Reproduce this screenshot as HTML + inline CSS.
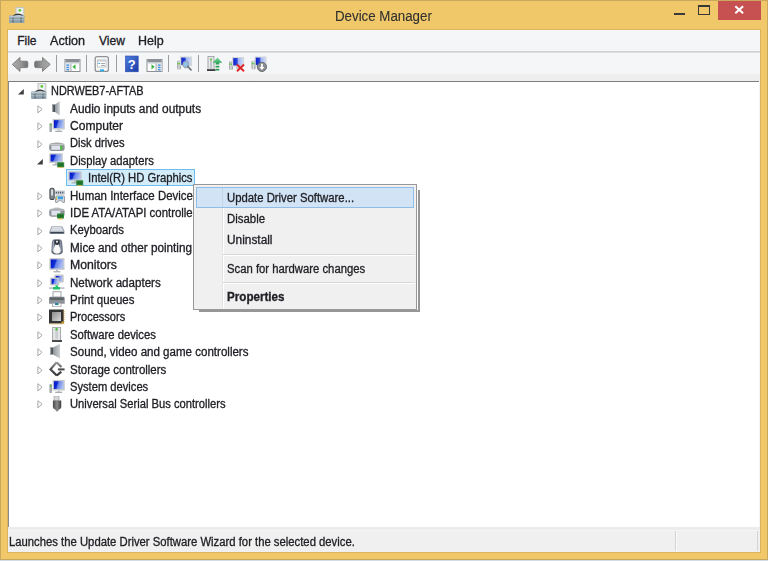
<!DOCTYPE html>
<html><head><meta charset="utf-8">
<style>
*{margin:0;padding:0;box-sizing:border-box}
html,body{width:768px;height:561px;overflow:hidden;background:#d3dbe4}
body{position:relative;font-family:"Liberation Sans",sans-serif;color:#000}
.a{position:absolute}
#frame{left:0;top:0;width:768px;height:560px;background:#f0c869;border:1px solid #c9a75c}
#title{left:335px;top:6px;font-size:14px;line-height:20px;color:#303030;-webkit-text-stroke:0.1px #303030;white-space:nowrap;transform:scaleX(0.95);transform-origin:0 0}
#close{left:718px;top:1px;width:43px;height:19px;background:#c75050}
#menubar{left:8px;top:30px;width:752px;height:22px;background:#f5f6f7;border-bottom:1px solid #cfd2d5}
#toolbar{left:8px;top:52px;width:752px;height:29px;background:linear-gradient(#dcdfe2 0,#dcdfe2 1px,#f5f6f7 1px,#f5f6f7 22px,#efefef 22px,#eeeeee 29px)}
#tree{left:8px;top:81px;width:751px;height:446px;background:#fff;border-top:1px solid #7c7c7c;border-left:1px solid #8a8a8a}
#status{left:8px;top:527px;width:752px;height:25px;background:linear-gradient(#ececec 0,#ececec 3px,#f6f6f6 3px,#f6f6f6 4px,#f0f0f0 4px)}
.t{position:absolute;font-size:12px;line-height:17px;white-space:nowrap;transform-origin:0 0;color:#202026;-webkit-text-stroke:0.3px #202026}
.mi{position:absolute;font-size:12px;line-height:16px;white-space:nowrap;transform-origin:0 0;color:#202026;-webkit-text-stroke:0.3px #202026}
.sep{position:absolute;width:1px;background:#a7a7a7;top:55px;height:17px}
.ic{position:absolute}
#ctx{left:193px;top:184px;width:224px;height:126px;background:#f0f0f0;border:1px solid #979797}
.sh{position:absolute;background:#969696;filter:blur(0.7px)}
</style></head><body>
<div id="frame" class="a"></div>
<div class="a" style="left:7px;top:29px;width:754px;height:524px;border:1px solid #dcb45c"></div>
<svg class="ic" style="left:9.00px;top:6.80px" width="16" height="16" viewBox="0 0 16 16"><rect x="6.9" y="0.6" width="8" height="9" fill="#e6e8ea" stroke="#bcc1c4" stroke-width="0.9"/><rect x="8.8" y="1.8" width="4" height="7" fill="#f7f8f8"/><circle cx="10.8" cy="3.4" r="1.4" fill="#5cc83e"/><path d="M4.3 8.8 Q9 5.6 14 8.8" stroke="#3a3a3a" stroke-width="1.6" fill="none"/><rect x="0.1" y="8.4" width="15.3" height="7.6" rx="0.8" fill="#8ea2ae"/><rect x="0.6" y="8.9" width="14.3" height="1.5" fill="#b9c8d0"/><rect x="0.6" y="12" width="14.3" height="1.2" fill="#a7b7c0"/><rect x="3.3" y="10.8" width="1.6" height="4.3" fill="#56636b"/><rect x="3.7" y="11.6" width="0.8" height="2.2" fill="#c9d3d8"/><rect x="11.1" y="10.8" width="1.6" height="4.3" fill="#56636b"/><rect x="11.5" y="11.6" width="0.8" height="2.2" fill="#c9d3d8"/></svg>
<div id="title" class="a">Device Manager</div>
<div class="a" style="left:674px;top:13px;width:11px;height:2px;background:#3a3a3a"></div>
<div class="a" style="left:698px;top:5px;width:12px;height:10px;border:1px solid #383838;border-top-width:2px"></div>
<div id="close" class="a"></div>
<svg class="a" style="left:734px;top:5px" width="11" height="10" viewBox="0 0 11 10"><path d="M1.3 1.2 L9.1 8.2 M9.1 1.2 L1.3 8.2" stroke="#fff" stroke-width="2.1"/></svg>

<div id="menubar" class="a"></div>
<div class="mi" style="left:17.2px;top:33px">File</div>
<div class="mi" style="left:49.6px;top:33px;transform:scaleX(1.05)">Action</div>
<div class="mi" style="left:99px;top:33px">View</div>
<div class="mi" style="left:138.3px;top:33px;transform:scaleX(1.04)">Help</div>

<div id="toolbar" class="a"></div>
<svg class="a" style="left:0;top:0" width="280" height="81" viewBox="0 0 280 81"><defs><linearGradient id="arrL" x1="0" y1="0" x2="1" y2="0"><stop offset="0" stop-color="#a9a9a9"/><stop offset="0.5" stop-color="#9a9a9a"/><stop offset="1" stop-color="#6e6e6e"/></linearGradient><linearGradient id="arrR" x1="0" y1="0" x2="1" y2="0"><stop offset="0" stop-color="#6e6e6e"/><stop offset="0.5" stop-color="#9a9a9a"/><stop offset="1" stop-color="#a9a9a9"/></linearGradient><linearGradient id="tscr" x1="0" y1="0" x2="1" y2="0"><stop offset="0" stop-color="#0c1fc9"/><stop offset="0.4" stop-color="#2a46dc"/><stop offset="0.55" stop-color="#9fb4f2"/><stop offset="1" stop-color="#cad8fa"/></linearGradient><linearGradient id="tow" x1="0" y1="0" x2="1" y2="0"><stop offset="0" stop-color="#9da1a5"/><stop offset="0.5" stop-color="#d9dbdd"/><stop offset="1" stop-color="#8e9296"/></linearGradient><linearGradient id="hlp" x1="0" y1="0" x2="1" y2="1"><stop offset="0" stop-color="#4d7fe0"/><stop offset="1" stop-color="#1c3aa6"/></linearGradient><linearGradient id="garr" x1="0" y1="0" x2="0" y2="1"><stop offset="0" stop-color="#7fdca0"/><stop offset="1" stop-color="#1e9a48"/></linearGradient></defs>
<path d="M12.3 64.4 L20 57.4 V61.2 H26.6 Q27.8 61.2 27.8 62.4 V66.4 Q27.8 67.6 26.6 67.6 H20 V71.4 Z" fill="url(#arrL)" stroke="#7a7a7a" stroke-width="0.9" stroke-linejoin="round"/>
<path d="M50.2 64.4 L42.5 57.4 V61.2 H35.9 Q34.7 61.2 34.7 62.4 V66.4 Q34.7 67.6 35.9 67.6 H42.5 V71.4 Z" fill="url(#arrR)" stroke="#7a7a7a" stroke-width="0.9" stroke-linejoin="round"/>
<rect x="56" y="55" width="1" height="17" fill="#9d9d9d"/>
<rect x="86" y="55" width="1" height="17" fill="#9d9d9d"/>
<rect x="116" y="55" width="1" height="17" fill="#9d9d9d"/>
<rect x="168" y="55" width="1" height="17" fill="#9d9d9d"/>
<rect x="198" y="55" width="1" height="17" fill="#9d9d9d"/>
<rect x="65.0" y="59.5" width="15" height="12" fill="#fff" stroke="#8d9196"/><rect x="65.5" y="60" width="14" height="2" fill="#8a9098"/><rect x="65.5" y="62" width="14" height="1.5" fill="#c5cbd1"/><rect x="65.5" y="63.5" width="5" height="7.5" fill="#dfe5ec"/><rect x="70.5" y="63.5" width="0.9" height="7.5" fill="#9aa0a6"/><rect x="66.5" y="64.5" width="2.5" height="1.3" fill="#3d8ee0"/><rect x="66.5" y="66.8" width="2.5" height="1.3" fill="#3d8ee0"/><rect x="66.5" y="69.1" width="2.5" height="1.3" fill="#3d8ee0"/><path d="M75.5 64.2 L72.5 66.8 L75.5 69.6 Z" fill="#33b53a"/>
<rect x="147.0" y="59.5" width="15" height="12" fill="#fff" stroke="#8d9196"/><rect x="147.5" y="60" width="14" height="2" fill="#8a9098"/><rect x="147.5" y="62" width="14" height="1.5" fill="#c5cbd1"/><rect x="156.5" y="63.5" width="5" height="7.5" fill="#dfe5ec"/><rect x="155.6" y="63.5" width="0.9" height="7.5" fill="#9aa0a6"/><rect x="158.0" y="64.5" width="2.5" height="1.3" fill="#3d8ee0"/><rect x="158.0" y="66.8" width="2.5" height="1.3" fill="#3d8ee0"/><rect x="158.0" y="69.1" width="2.5" height="1.3" fill="#3d8ee0"/><path d="M151.5 64.2 L154.5 66.8 L151.5 69.6 Z" fill="#33b53a"/>
<rect x="95.2" y="56.6" width="13.2" height="14.8" rx="2" fill="#f7f7f7" stroke="#8f9397" stroke-width="1.3"/><rect x="97.5" y="60" width="8.5" height="7" fill="#fff" stroke="#b5babf" stroke-width="0.8"/><rect x="97.5" y="60" width="8.5" height="1.6" fill="#c9ced3"/><rect x="98.3" y="63" width="1.8" height="1" fill="#3aa0e8"/><path d="M101 63.5 H105 M101 65.5 H105" stroke="#8e949a" stroke-width="0.8"/><rect x="100" y="69.3" width="4" height="2" fill="#2fb0ea"/>
<rect x="125.4" y="56" width="12.8" height="15.8" fill="url(#hlp)"/><rect x="125.4" y="56" width="12.8" height="15.8" fill="none" stroke="#2a4aa8" stroke-width="0.6"/><text x="131.8" y="68.6" font-family="Liberation Sans" font-size="13" font-weight="bold" fill="#fff" text-anchor="middle">?</text>
<rect x="177" y="60.6" width="4" height="9" rx="1.6" fill="url(#tow)"/><rect x="177.3" y="63" width="3.4" height="1.3" fill="#5fd040"/><rect x="180" y="56.5" width="12" height="9.5" fill="#d4d6d7"/><rect x="181.3" y="57.6" width="9.4" height="7.3" fill="url(#tscr)"/><rect x="184" y="66" width="4" height="2.5" fill="#c8cacc"/>
<circle cx="185.8" cy="64.4" r="2.8" fill="#8ec4f0" stroke="#9aa6b0" stroke-width="1.1"/><path d="M187.8 66.4 L191 69.8" stroke="#6f767c" stroke-width="1.7" stroke-linecap="round"/>
<rect x="208" y="56.5" width="6" height="13.5" fill="#e6e8ea" stroke="#9ea3a7" stroke-width="0.9"/><rect x="210" y="58" width="2" height="11" fill="#c4c8cb"/><circle cx="211" cy="59.5" r="1.1" fill="#6fd050"/><rect x="207" y="69.2" width="8.5" height="1.8" fill="#3e3e3e"/><path d="M217.5 57.6 L222.3 62.7 H219.3 V64.6 H215.7 V62.7 H212.7 Z" fill="url(#garr)"/><rect x="215.5" y="65.8" width="3.8" height="1.7" fill="#2a9a50"/><rect x="215.5" y="68.8" width="3.8" height="1.7" fill="#2a9a50"/>
<rect x="229" y="61.1" width="4" height="9" rx="1.6" fill="url(#tow)"/><rect x="229.3" y="63.5" width="3.4" height="1.3" fill="#5fd040"/><rect x="232" y="57.0" width="12" height="9.5" fill="#d4d6d7"/><rect x="233.3" y="58.1" width="9.4" height="7.3" fill="url(#tscr)"/><rect x="236" y="66.5" width="4" height="2.5" fill="#c8cacc"/>
<path d="M237 64.6 L244 71.2 M244 64.6 L237 71.2" stroke="#e0242c" stroke-width="2"/>
<rect x="251.5" y="60.6" width="4" height="9" rx="1.6" fill="url(#tow)"/><rect x="251.8" y="63" width="3.4" height="1.3" fill="#5fd040"/><rect x="254.5" y="56.5" width="12" height="9.5" fill="#d4d6d7"/><rect x="255.8" y="57.6" width="9.4" height="7.3" fill="url(#tscr)"/><rect x="258.5" y="66" width="4" height="2.5" fill="#c8cacc"/>
<circle cx="261.9" cy="66.9" r="4.6" fill="#8a8e92" stroke="#5f6468" stroke-width="0.9"/><path d="M261.9 63.8 V68.5" stroke="#fff" stroke-width="1.8"/><path d="M259.4 67 L261.9 70 L264.4 67 Z" fill="#fff"/>
</svg>
<div id="tree" class="a"></div>
<div class="a" style="left:759px;top:81px;width:1px;height:446px;background:#f3f4f6"></div>
<div id="status" class="a"></div>
<div class="a" style="left:675px;top:531px;width:1px;height:20px;background:#d4d4d4"></div><div class="a" style="left:676px;top:531px;width:1px;height:20px;background:#fafafa"></div>
<div class="a" style="left:757px;top:531px;width:1px;height:20px;background:#d4d4d4"></div>
<div class="t" style="left:9.3px;top:534px;transform:scaleX(0.941)">Launches the Update Driver Software Wizard for the selected device.</div>

<svg width="0" height="0" style="position:absolute"><defs>
<linearGradient id="scr" x1="0" y1="0" x2="1" y2="0.25"><stop offset="0" stop-color="#0012c4"/><stop offset="0.42" stop-color="#1232d8"/><stop offset="0.52" stop-color="#6680e8"/><stop offset="1" stop-color="#aabef2"/></linearGradient>
<linearGradient id="cone" x1="0" y1="0" x2="1" y2="0"><stop offset="0" stop-color="#8e959b"/><stop offset="1" stop-color="#cdd1d4"/></linearGradient>
<linearGradient id="chip" x1="0" y1="0" x2="1" y2="1"><stop offset="0" stop-color="#8d8d8d"/><stop offset="1" stop-color="#d8d8d8"/></linearGradient>
<linearGradient id="stg" x1="0" y1="0" x2="0" y2="1" gradientUnits="objectBoundingBox"><stop offset="0" stop-color="#9a9a9a"/><stop offset="0.5" stop-color="#555"/><stop offset="1" stop-color="#333"/></linearGradient>
<linearGradient id="usb" x1="0" y1="0" x2="1" y2="0"><stop offset="0" stop-color="#4a4a4a"/><stop offset="0.5" stop-color="#8a8a8a"/><stop offset="1" stop-color="#3c3c3c"/></linearGradient>
</defs></svg>
<svg class="ic" style="left:30.80px;top:82.60px" width="16" height="16" viewBox="0 0 16 16"><rect x="6.9" y="0.6" width="8" height="9" fill="#e6e8ea" stroke="#bcc1c4" stroke-width="0.9"/><rect x="8.8" y="1.8" width="4" height="7" fill="#f7f8f8"/><circle cx="10.8" cy="3.4" r="1.4" fill="#5cc83e"/><path d="M4.3 8.8 Q9 5.6 14 8.8" stroke="#3a3a3a" stroke-width="1.6" fill="none"/><rect x="0.1" y="8.4" width="15.3" height="7.6" rx="0.8" fill="#8ea2ae"/><rect x="0.6" y="8.9" width="14.3" height="1.5" fill="#b9c8d0"/><rect x="0.6" y="12" width="14.3" height="1.2" fill="#a7b7c0"/><rect x="3.3" y="10.8" width="1.6" height="4.3" fill="#56636b"/><rect x="3.7" y="11.6" width="0.8" height="2.2" fill="#c9d3d8"/><rect x="11.1" y="10.8" width="1.6" height="4.3" fill="#56636b"/><rect x="11.5" y="11.6" width="0.8" height="2.2" fill="#c9d3d8"/></svg>
<svg class="ic" style="left:18.30px;top:89.30px" width="6" height="6" viewBox="0 0 6 6"><path d="M5.8 0 V5.6 H0 Z" fill="#404040"/></svg>
<div class="t" style="left:51.0px;top:83.30px;transform:scaleX(0.9107)">NDRWEB7-AFTAB</div>
<svg class="ic" style="left:49.00px;top:99.99px" width="16" height="16" viewBox="0 0 16 16"><rect x="3" y="4.5" width="3" height="7.5" fill="#4a5056"/><rect x="3" y="4.5" width="1.2" height="7.5" fill="#9aa4ad"/><path d="M6 4.5 L10.8 0.9 V15.5 L6 12 Z" fill="url(#cone)"/></svg>
<svg class="ic" style="left:37.00px;top:104.79px" width="6" height="9" viewBox="0 0 6 9"><path d="M0.9 0.7 L5.1 4.3 L0.9 7.9 Z" fill="#fff" stroke="#a8a8a8" stroke-width="1"/></svg>
<div class="t" style="left:69.5px;top:100.69px;transform:scaleX(0.9924)">Audio inputs and outputs</div>
<svg class="ic" style="left:49.00px;top:117.38px" width="16" height="16" viewBox="0 0 16 16"><rect x="0.4" y="6.1" width="2.6" height="9" rx="0.8" fill="#a6abaf"/><rect x="0.9" y="7.1" width="1.6" height="1.6" fill="#62c04a"/><rect x="3.6" y="1.9" width="12.2" height="10.6" fill="#c8cbce"/><rect x="4.9" y="3.2" width="9.6" height="7.8" fill="url(#scr)"/><rect x="8.7" y="12.5" width="2" height="1.2" fill="#b5b9bc"/><rect x="6.199999999999999" y="13.7" width="7" height="1.3" fill="#a9adb1"/></svg>
<svg class="ic" style="left:37.00px;top:122.18px" width="6" height="9" viewBox="0 0 6 9"><path d="M0.9 0.7 L5.1 4.3 L0.9 7.9 Z" fill="#fff" stroke="#a8a8a8" stroke-width="1"/></svg>
<div class="t" style="left:69.5px;top:118.08px;transform:scaleX(1.0059)">Computer</div>
<svg class="ic" style="left:49.00px;top:134.77px" width="16" height="16" viewBox="0 0 16 16"><path d="M4 8.6 Q5 7.2 6.5 7.2 H9.5 Q11 7.2 12 8.6 Z" fill="#c9cbcd"/><rect x="0.2" y="8.3" width="15.4" height="7.6" rx="2.6" fill="#8f9397"/><rect x="1" y="9" width="13.8" height="1.3" rx="0.6" fill="#c5c8cb"/><rect x="2.4" y="10.6" width="9" height="4.2" fill="#dfe2ec"/><rect x="11.2" y="10.6" width="2" height="4.2" rx="0.8" fill="#46c03a"/></svg>
<svg class="ic" style="left:37.00px;top:139.57px" width="6" height="9" viewBox="0 0 6 9"><path d="M0.9 0.7 L5.1 4.3 L0.9 7.9 Z" fill="#fff" stroke="#a8a8a8" stroke-width="1"/></svg>
<div class="t" style="left:69.5px;top:135.47px;transform:scaleX(0.9288)">Disk drives</div>
<svg class="ic" style="left:49.00px;top:152.16px" width="16" height="16" viewBox="0 0 16 16"><rect x="0.3" y="1.2" width="13.5" height="9.8" fill="#c8cbce"/><rect x="1.6" y="2.5" width="10.9" height="7.000000000000001" fill="url(#scr)"/><rect x="6.05" y="11.0" width="2" height="1.2" fill="#b5b9bc"/><rect x="3.55" y="12.2" width="7" height="1.3" fill="#a9adb1"/><rect x="8.2" y="10.3" width="7" height="5" fill="#2f8a3a"/><rect x="9.2" y="11.3" width="5" height="3" fill="#1f6e2a"/><rect x="9.2" y="15.3" width="5" height="0.9" fill="#e0b040"/></svg>
<svg class="ic" style="left:36.90px;top:158.86px" width="6" height="6" viewBox="0 0 6 6"><path d="M5.8 0 V5.6 H0 Z" fill="#404040"/></svg>
<div class="t" style="left:69.5px;top:152.86px;transform:scaleX(0.9376)">Display adapters</div>
<div class="a" style="left:66px;top:169px;width:129px;height:17px;background:#d3ecfa;border:1px solid #6fbdec"></div>
<svg class="ic" style="left:68.00px;top:169.55px" width="16" height="16" viewBox="0 0 16 16"><rect x="0.3" y="1.2" width="13.5" height="9.8" fill="#c8cbce"/><rect x="1.6" y="2.5" width="10.9" height="7.000000000000001" fill="url(#scr)"/><rect x="6.05" y="11.0" width="2" height="1.2" fill="#b5b9bc"/><rect x="3.55" y="12.2" width="7" height="1.3" fill="#a9adb1"/><rect x="8.2" y="10.3" width="7" height="5" fill="#2f8a3a"/><rect x="9.2" y="11.3" width="5" height="3" fill="#1f6e2a"/><rect x="9.2" y="15.3" width="5" height="0.9" fill="#e0b040"/></svg>
<div class="t" style="left:87.5px;top:170.25px;transform:scaleX(0.9384)">Intel(R) HD Graphics</div>
<svg class="ic" style="left:49.00px;top:186.94px" width="16" height="16" viewBox="0 0 16 16"><rect x="0.4" y="0.8" width="5.3" height="12.2" rx="2.6" fill="#3c4248"/><rect x="1.2" y="1.6" width="3.7" height="10.6" rx="1.8" fill="#7e868d"/><rect x="2.3" y="2.5" width="1.5" height="6" fill="#f4f4f4"/><rect x="6" y="3.5" width="10" height="4.2" rx="0.8" fill="#c9ced6"/><path d="M6.8 5.6 H15.2" stroke="#56606c" stroke-width="1.6" stroke-dasharray="1.2 0.9"/><path d="M6.3 10 Q6.3 8.5 8 8.5 H14.2 Q16 8.5 16 10.5 V14.5 Q16 16 14.5 16 Q13.2 16 12.6 14.2 H9.6 Q9 16 7.8 16 Q6 16 6 14.5 Z" fill="#8d949b"/><path d="M7 10.3 Q7 9.2 8.2 9.2 H14 Q15.2 9.2 15.2 10.5 V14.2 Q15.2 15.2 14.4 15.2 Q13.6 15.2 13.2 13.5 H9.2 Q8.8 15.2 7.9 15.2 Q7 15.2 7 14.2 Z" fill="#d4d8dc"/><rect x="9" y="9.6" width="5" height="2.6" fill="#3a9ee6"/><circle cx="7.9" cy="10.4" r="0.8" fill="#7ad46a"/><circle cx="7.6" cy="12.2" r="0.7" fill="#e89a40"/></svg>
<svg class="ic" style="left:37.00px;top:191.74px" width="6" height="9" viewBox="0 0 6 9"><path d="M0.9 0.7 L5.1 4.3 L0.9 7.9 Z" fill="#fff" stroke="#a8a8a8" stroke-width="1"/></svg>
<div class="t" style="left:69.5px;top:187.64px;transform:scaleX(0.9550)">Human Interface Devices</div>
<svg class="ic" style="left:49.00px;top:204.33px" width="16" height="16" viewBox="0 0 16 16"><path d="M4 5 Q5 3.6 6.5 3.6 H9.5 Q11 3.6 12 5 Z" fill="#c9cbcd"/><rect x="0.2" y="4.7" width="15.4" height="8" rx="2.6" fill="#8f9397"/><rect x="1" y="5.4" width="13.8" height="1.3" rx="0.6" fill="#c5c8cb"/><rect x="2.4" y="7" width="9" height="4.4" fill="#dfe2ec"/><rect x="8" y="9.5" width="7" height="5" fill="#2f8a3a"/><rect x="9" y="10.5" width="5" height="3" fill="#1f6e2a"/><rect x="9" y="14.5" width="5" height="0.9" fill="#e0b040"/></svg>
<svg class="ic" style="left:37.00px;top:209.13px" width="6" height="9" viewBox="0 0 6 9"><path d="M0.9 0.7 L5.1 4.3 L0.9 7.9 Z" fill="#fff" stroke="#a8a8a8" stroke-width="1"/></svg>
<div class="t" style="left:69.5px;top:205.03px;transform:scaleX(0.9500)">IDE ATA/ATAPI controllers</div>
<svg class="ic" style="left:49.00px;top:221.72px" width="16" height="16" viewBox="0 0 16 16"><path d="M3 4.2 H12.6 Q13.4 4.2 13.8 5 L15.6 9.6 V11.3 Q15.6 11.9 15 11.9 H0.9 Q0.3 11.9 0.3 11.3 V9.6 L2 5 Q2.3 4.2 3 4.2 Z" fill="#a3abba"/><path d="M3.4 5 H12.2 L14.4 9.6 H1.4 Z" fill="#e2e5ea"/><path d="M3.5 6.2 H12.3 M2.6 8.3 H13.3" stroke="#b8bec8" stroke-width="0.9" stroke-dasharray="1.1 0.9"/><rect x="1.2" y="9.9" width="13.6" height="1.6" fill="#3a4452"/></svg>
<svg class="ic" style="left:37.00px;top:226.52px" width="6" height="9" viewBox="0 0 6 9"><path d="M0.9 0.7 L5.1 4.3 L0.9 7.9 Z" fill="#fff" stroke="#a8a8a8" stroke-width="1"/></svg>
<div class="t" style="left:69.5px;top:222.42px;transform:scaleX(0.9413)">Keyboards</div>
<svg class="ic" style="left:49.00px;top:239.11px" width="16" height="16" viewBox="0 0 16 16"><path d="M4.5 0.6 Q8 -0.1 11.5 0.6 Q13 1.5 13.2 4 L13.8 12.5 Q13.8 15.6 8 15.6 Q2.4 15.6 2.4 12.5 L2.9 4 Q3.1 1.5 4.5 0.6 Z" fill="#5f6878"/><path d="M3.6 4 Q3.8 2 5 1.3 L5.2 12 Q4.6 13.5 3.3 12 Z" fill="#a0a8b6"/><path d="M12.4 4 Q12.2 2 11 1.3 L10.8 12 Q11.4 13.5 12.7 12 Z" fill="#8a93a2"/><path d="M6.4 5.2 Q8 6.6 9.6 5.2 L11.4 10 Q12.6 14.6 8 14.7 Q3.4 14.6 4.6 10 Z" fill="#f6f6f6"/><path d="M5.6 1.2 H10.4 V5 Q8 6.4 5.6 5 Z" fill="#30363f"/><rect x="7" y="1.8" width="2" height="1.8" fill="#e2e2e2"/></svg>
<svg class="ic" style="left:37.00px;top:243.91px" width="6" height="9" viewBox="0 0 6 9"><path d="M0.9 0.7 L5.1 4.3 L0.9 7.9 Z" fill="#fff" stroke="#a8a8a8" stroke-width="1"/></svg>
<div class="t" style="left:69.5px;top:239.81px;transform:scaleX(0.9780)">Mice and other pointing devices</div>
<svg class="ic" style="left:49.00px;top:256.50px" width="16" height="16" viewBox="0 0 16 16"><rect x="0.4" y="1.1" width="15.1" height="11.8" fill="#c8cbce"/><rect x="1.7000000000000002" y="2.4000000000000004" width="12.5" height="9.0" fill="url(#scr)"/><rect x="6.95" y="12.9" width="2" height="1.2" fill="#b5b9bc"/><rect x="4.45" y="14.1" width="7" height="1.3" fill="#a9adb1"/></svg>
<svg class="ic" style="left:37.00px;top:261.30px" width="6" height="9" viewBox="0 0 6 9"><path d="M0.9 0.7 L5.1 4.3 L0.9 7.9 Z" fill="#fff" stroke="#a8a8a8" stroke-width="1"/></svg>
<div class="t" style="left:69.5px;top:257.20px;transform:scaleX(1.0214)">Monitors</div>
<svg class="ic" style="left:49.00px;top:273.89px" width="16" height="16" viewBox="0 0 16 16"><rect x="5.2" y="0.6" width="9.5" height="8" rx="1.2" fill="#c4c7ca"/><rect x="6.8" y="2" width="6.3" height="5.2" fill="url(#scr)"/><rect x="1.1" y="3.5" width="9.2" height="8" rx="1.2" fill="#c4c7ca"/><rect x="2.6" y="4.9" width="6.2" height="5.2" fill="url(#scr)"/><rect x="0" y="13.2" width="15.5" height="1.8" fill="#c2c6ca"/><rect x="6.5" y="11.4" width="2.5" height="2" fill="#1fc46a"/><rect x="4" y="12.9" width="7" height="2.7" rx="0.5" fill="#1fc46a"/></svg>
<svg class="ic" style="left:37.00px;top:278.69px" width="6" height="9" viewBox="0 0 6 9"><path d="M0.9 0.7 L5.1 4.3 L0.9 7.9 Z" fill="#fff" stroke="#a8a8a8" stroke-width="1"/></svg>
<div class="t" style="left:69.5px;top:274.59px;transform:scaleX(0.9645)">Network adapters</div>
<svg class="ic" style="left:49.00px;top:291.28px" width="16" height="16" viewBox="0 0 16 16"><rect x="4" y="0.7" width="8" height="5.5" fill="#fafafa" stroke="#9aa0a5" stroke-width="0.9"/><path d="M1.2 5.7 H14.5 Q15.7 5.7 15.7 7 V12.7 H0 V7 Q0 5.7 1.2 5.7 Z" fill="#8b9196"/><rect x="1" y="6.5" width="13.7" height="2.5" fill="#5e6368"/><rect x="3.5" y="12.2" width="8.5" height="3.5" fill="#fafafa" stroke="#a0a5aa" stroke-width="0.8"/><rect x="6" y="12" width="3" height="2" fill="#2a7fd0"/><rect x="8" y="12.5" width="1.5" height="1.5" fill="#1a9040"/></svg>
<svg class="ic" style="left:37.00px;top:296.08px" width="6" height="9" viewBox="0 0 6 9"><path d="M0.9 0.7 L5.1 4.3 L0.9 7.9 Z" fill="#fff" stroke="#a8a8a8" stroke-width="1"/></svg>
<div class="t" style="left:69.5px;top:291.98px;transform:scaleX(0.9558)">Print queues</div>
<svg class="ic" style="left:49.00px;top:308.67px" width="16" height="16" viewBox="0 0 16 16"><rect x="0" y="0.5" width="14.7" height="14" fill="#333"/><rect x="3" y="3" width="9" height="9" fill="url(#chip)"/><path d="M15 2 V14.5 M1.5 15 H13.8" stroke="#e0a020" stroke-width="0.9" stroke-dasharray="1 1"/><rect x="12.5" y="12.5" width="2" height="2" fill="#e0a020"/></svg>
<svg class="ic" style="left:37.00px;top:313.47px" width="6" height="9" viewBox="0 0 6 9"><path d="M0.9 0.7 L5.1 4.3 L0.9 7.9 Z" fill="#fff" stroke="#a8a8a8" stroke-width="1"/></svg>
<div class="t" style="left:69.5px;top:309.37px;transform:scaleX(0.9197)">Processors</div>
<svg class="ic" style="left:49.00px;top:326.06px" width="16" height="16" viewBox="0 0 16 16"><rect x="3.6" y="1.5" width="8" height="13" fill="#e2e4e6" stroke="#9fa4a8" stroke-width="0.9"/><rect x="6.4" y="4" width="2.4" height="9" fill="#c9ccd0"/><circle cx="7.6" cy="3.2" r="1.3" fill="#4cc040"/><rect x="3" y="14" width="10" height="2" fill="#4a4a4a"/></svg>
<svg class="ic" style="left:37.00px;top:330.86px" width="6" height="9" viewBox="0 0 6 9"><path d="M0.9 0.7 L5.1 4.3 L0.9 7.9 Z" fill="#fff" stroke="#a8a8a8" stroke-width="1"/></svg>
<div class="t" style="left:69.5px;top:326.76px;transform:scaleX(0.9401)">Software devices</div>
<svg class="ic" style="left:49.00px;top:343.45px" width="16" height="16" viewBox="0 0 16 16"><rect x="1" y="4.5" width="3" height="7" fill="#4a5056"/><rect x="1" y="4.5" width="1.2" height="7" fill="#9aa4ad"/><path d="M4 4.5 L11 0.7 V15.5 L4 11.5 Z" fill="url(#cone)"/></svg>
<svg class="ic" style="left:37.00px;top:348.25px" width="6" height="9" viewBox="0 0 6 9"><path d="M0.9 0.7 L5.1 4.3 L0.9 7.9 Z" fill="#fff" stroke="#a8a8a8" stroke-width="1"/></svg>
<div class="t" style="left:69.5px;top:344.15px;transform:scaleX(0.9625)">Sound, video and game controllers</div>
<svg class="ic" style="left:49.00px;top:360.84px" width="16" height="16" viewBox="0 0 16 16"><path d="M7.6 1.3 L1.5 8.4 L7.8 14.5 M7.6 1.3 L12.5 6 M7.8 14.5 L12.3 10.6" stroke="url(#stg)" stroke-width="2.2" fill="none" stroke-linejoin="miter"/><path d="M9 8.4 H15.6" stroke="#4a4a4a" stroke-width="2"/></svg>
<svg class="ic" style="left:37.00px;top:365.64px" width="6" height="9" viewBox="0 0 6 9"><path d="M0.9 0.7 L5.1 4.3 L0.9 7.9 Z" fill="#fff" stroke="#a8a8a8" stroke-width="1"/></svg>
<div class="t" style="left:69.5px;top:361.54px;transform:scaleX(0.9561)">Storage controllers</div>
<svg class="ic" style="left:49.00px;top:378.23px" width="16" height="16" viewBox="0 0 16 16"><rect x="0.4" y="6.1" width="2.6" height="9" rx="0.8" fill="#a6abaf"/><rect x="0.9" y="7.1" width="1.6" height="1.6" fill="#62c04a"/><rect x="3.6" y="1.9" width="12.2" height="10.6" fill="#c8cbce"/><rect x="4.9" y="3.2" width="9.6" height="7.8" fill="url(#scr)"/><rect x="8.7" y="12.5" width="2" height="1.2" fill="#b5b9bc"/><rect x="6.199999999999999" y="13.7" width="7" height="1.3" fill="#a9adb1"/></svg>
<svg class="ic" style="left:37.00px;top:383.03px" width="6" height="9" viewBox="0 0 6 9"><path d="M0.9 0.7 L5.1 4.3 L0.9 7.9 Z" fill="#fff" stroke="#a8a8a8" stroke-width="1"/></svg>
<div class="t" style="left:69.5px;top:378.93px;transform:scaleX(0.9306)">System devices</div>
<svg class="ic" style="left:49.00px;top:395.62px" width="16" height="16" viewBox="0 0 16 16"><rect x="5" y="0" width="5" height="4.5" fill="#d6d8da" stroke="#9a9ea2" stroke-width="0.7"/><path d="M3.9 4.5 H12.25 V11 Q12.25 12.5 10 13.5 L8.5 15.6 H7.6 L6.1 13.5 Q3.9 12.5 3.9 11 Z" fill="url(#usb)"/></svg>
<svg class="ic" style="left:37.00px;top:400.42px" width="6" height="9" viewBox="0 0 6 9"><path d="M0.9 0.7 L5.1 4.3 L0.9 7.9 Z" fill="#fff" stroke="#a8a8a8" stroke-width="1"/></svg>
<div class="t" style="left:69.5px;top:396.32px;transform:scaleX(0.9327)">Universal Serial Bus controllers</div>

<div class="sh" style="left:418px;top:190px;width:2px;height:122px"></div><div class="sh" style="left:199px;top:310px;width:221px;height:2px"></div><div id="ctx" class="a"></div>
<div class="a" style="left:222px;top:186px;width:1px;height:122px;background:#e2e3e3"></div>
<div class="a" style="left:223px;top:186px;width:1px;height:122px;background:#fff"></div>
<div class="a" style="left:223px;top:254px;width:192px;height:1px;background:#d7d7d7"></div>
<div class="a" style="left:223px;top:255px;width:192px;height:1px;background:#fff"></div>
<div class="a" style="left:223px;top:282px;width:192px;height:1px;background:#d7d7d7"></div>
<div class="a" style="left:223px;top:283px;width:192px;height:1px;background:#fff"></div>
<div class="a" style="left:196px;top:187px;width:218px;height:21px;background:#d1e3f5;border:1px solid #8fbdea"></div><div class="a" style="left:222px;top:188px;width:1px;height:19px;background:#c3d5e8"></div>
<div class="t" style="left:227.3px;top:190.04px;transform:scaleX(0.9434);">Update Driver Software...</div>
<div class="t" style="left:227.3px;top:211.44px;transform:scaleX(0.9495);">Disable</div>
<div class="t" style="left:227.3px;top:232.44px;transform:scaleX(0.9887);">Uninstall</div>
<div class="t" style="left:227.3px;top:260.64px;transform:scaleX(0.9417);">Scan for hardware changes</div>
<div class="t" style="left:227.3px;top:288.64px;transform:scaleX(0.9687);font-weight:bold;">Properties</div>
</body></html>
